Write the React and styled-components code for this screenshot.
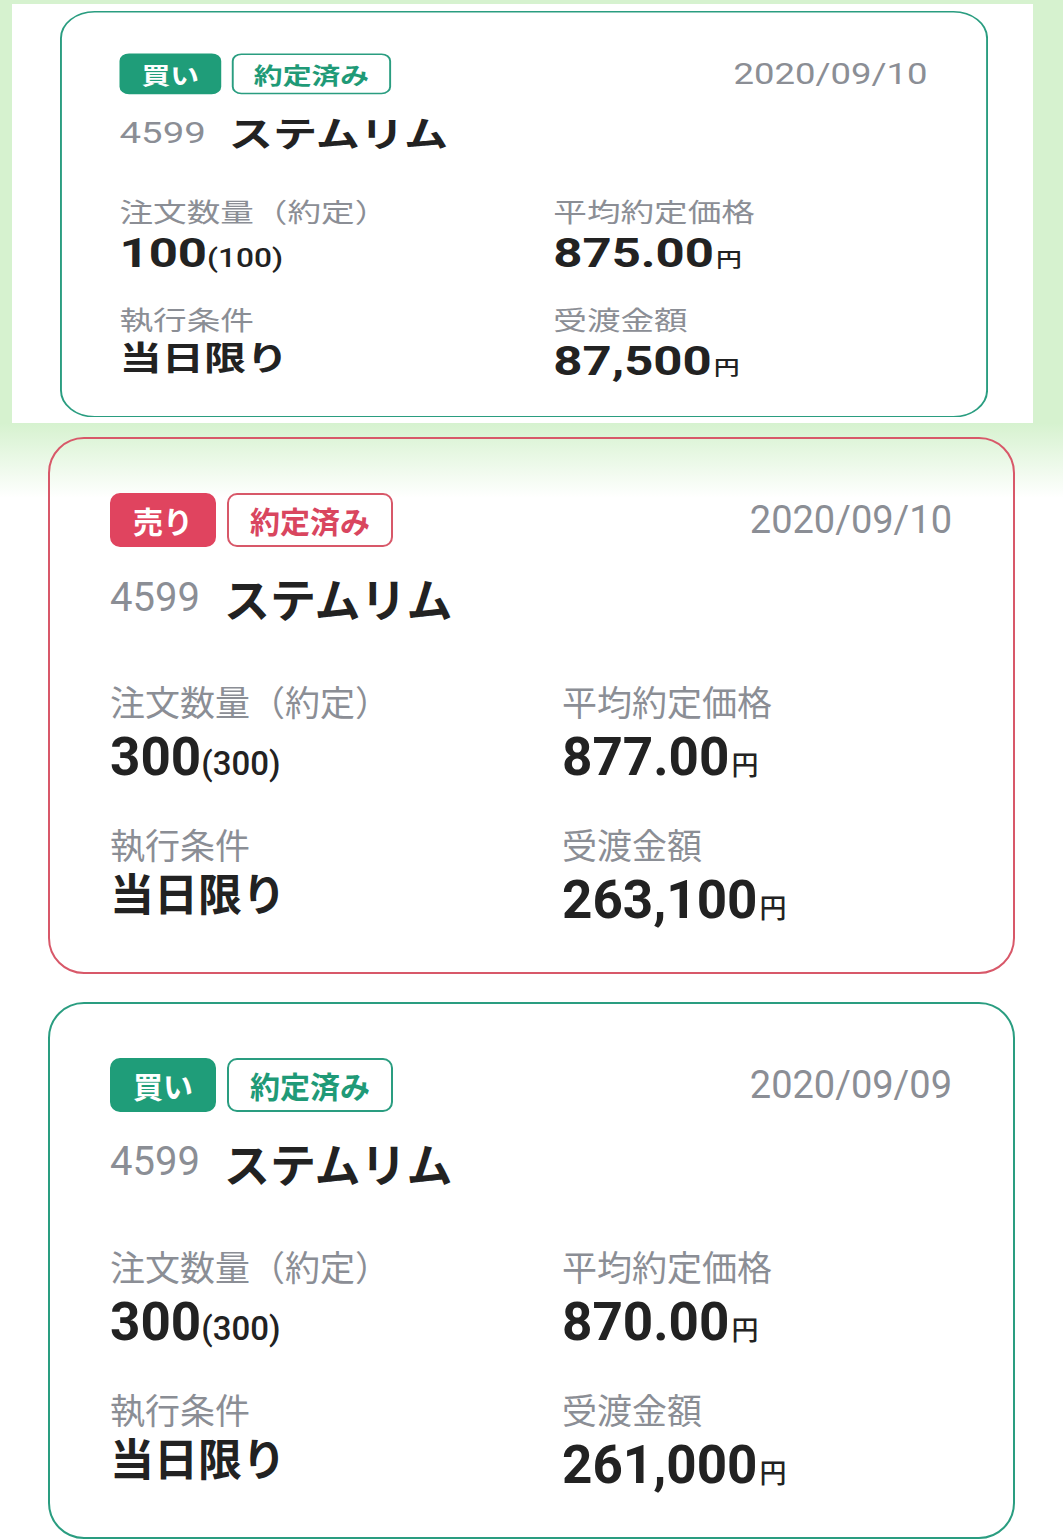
import React from 'react';
import styled, { createGlobalStyle } from 'styled-components';

const Global = createGlobalStyle`
  html, body { margin: 0; padding: 0; }
  body {
    background: linear-gradient(#d6f2cf 0, #d6f2cf 423px, #ffffff 498px) no-repeat, #ffffff;
    font-family: Roboto, "Noto Sans CJK JP", sans-serif;
    color: #222;
  }
`;

const NUM = `Roboto, "Noto Sans CJK JP", sans-serif`;
const JP = `"Noto Sans CJK JP", Roboto, sans-serif`;

const COLORS = {
  buy: { fill: '#1f9d79', border: '#2a9d80', text: '#1f9a77' },
  sell: { fill: '#e0445f', border: '#d85869', text: '#d9465f' },
};

const Page = styled.main`
  display: flex;
  flex-direction: column;
  padding-bottom: 2px;
`;

/* The first card in the screenshot is a squashed copy pasted on a white panel with a green glow */
const GlowPanel = styled.div`
  margin: 4px 30px 0 12px;
  height: 419px;
  background: #ffffff;
  padding: 7px 0 0 48px;
  box-sizing: border-box;
`;

const Squashed = styled.div`
  width: 928px;
  height: 406px;
  overflow: hidden;
  & > section {
    transform: scale(0.9597, 0.757);
    transform-origin: 0 0;
  }
`;

const List = styled.div`
  display: flex;
  flex-direction: column;
  gap: 28px;
  padding: 14px 0 0 48px;
`;

const Card = styled.section`
  box-sizing: border-box;
  width: 967px;
  border: 2px solid ${p => COLORS[p.$tone].border};
  border-radius: 36px;
  padding: 54px 61px 42px 60px;
  background: transparent;
`;

const TopRow = styled.div`
  display: flex;
  align-items: center;
  justify-content: space-between;
`;

const Badges = styled.div`
  display: flex;
  gap: 11px;
`;

const Badge = styled.span`
  box-sizing: border-box;
  display: inline-flex;
  align-items: center;
  justify-content: center;
  height: 54px;
  padding: 0 21px;
  border-radius: 10px;
  border: 2px solid ${p => (p.$solid ? COLORS[p.$tone].fill : COLORS[p.$tone].border)};
  background: ${p => (p.$solid ? COLORS[p.$tone].fill : '#ffffff')};
  color: ${p => (p.$solid ? '#ffffff' : COLORS[p.$tone].text)};
  font-family: ${JP};
  font-weight: 700;
  font-size: 30px;
  line-height: 1;
`;

const DateText = styled.span`
  font-family: ${NUM};
  font-size: 38px;
  color: #8b8e95;
  line-height: 1;
`;

const Title = styled.div`
  display: flex;
  align-items: center;
  gap: 24px;
  margin-top: 23px;
  line-height: 1.2;
`;

const Code = styled.span`
  font-family: ${NUM};
  font-size: 40px;
  color: #8b8e95;
`;

const Name = styled.span`
  font-family: ${JP};
  font-size: 46px;
  font-weight: 700;
  color: #222;
`;

const Grid = styled.div`
  display: grid;
  grid-template-columns: 452px 1fr;
  row-gap: 37px;
  margin-top: 55px;
`;

const Cell = styled.div`
  display: flex;
  flex-direction: column;
`;

const Label = styled.span`
  font-family: ${JP};
  font-size: 35px;
  line-height: 1.2;
  color: #8b8e95;
`;

const Value = styled.span`
  margin-top: ${p => (p.$jp ? 3 : 6)}px;
  font-family: ${p => (p.$jp ? JP : NUM)};
  font-size: ${p => (p.$jp ? 44 : 53)}px;
  font-weight: 700;
  line-height: 1.1;
  color: #222;
  white-space: nowrap;
`;

const Sub = styled.span`
  font-family: ${NUM};
  font-size: 33px;
  font-weight: 500;
`;

const Yen = styled.span`
  font-family: ${JP};
  font-size: 27px;
  font-weight: 500;
  margin-left: 2px;
`;

function OrderCard({ tone, date, qty, price, term, amount }) {
  return (
    <Card $tone={tone}>
      <TopRow>
        <Badges>
          <Badge $tone={tone} $solid>{tone === 'buy' ? '買い' : '売り'}</Badge>
          <Badge $tone={tone}>約定済み</Badge>
        </Badges>
        <DateText>{date}</DateText>
      </TopRow>
      <Title>
        <Code>4599</Code>
        <Name>ステムリム</Name>
      </Title>
      <Grid>
        <Cell>
          <Label>注文数量（約定）</Label>
          <Value>{qty}<Sub>({qty})</Sub></Value>
        </Cell>
        <Cell>
          <Label>平均約定価格</Label>
          <Value>{price}<Yen>円</Yen></Value>
        </Cell>
        <Cell>
          <Label>執行条件</Label>
          <Value $jp>{term}</Value>
        </Cell>
        <Cell>
          <Label>受渡金額</Label>
          <Value>{amount}<Yen>円</Yen></Value>
        </Cell>
      </Grid>
    </Card>
  );
}

export default function App() {
  return (
    <>
      <Global />
      <Page>
        <GlowPanel>
          <Squashed>
            <OrderCard tone="buy" date="2020/09/10" qty="100" price="875.00" term="当日限り" amount="87,500" />
          </Squashed>
        </GlowPanel>
        <List>
          <OrderCard tone="sell" date="2020/09/10" qty="300" price="877.00" term="当日限り" amount="263,100" />
          <OrderCard tone="buy" date="2020/09/09" qty="300" price="870.00" term="当日限り" amount="261,000" />
        </List>
      </Page>
    </>
  );
}
